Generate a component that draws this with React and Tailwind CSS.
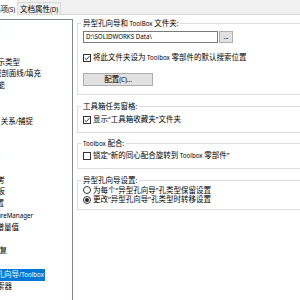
import React from "react";

function T({ s }) {
  const parts = s.match(/[\x20-\x7E]+|[^\x20-\x7E]+/g) || [];
  return parts.map((p, i) =>
    /^[\x20-\x7E]+$/.test(p) ? (
      <span key={i} className="text-[6.2px] whitespace-pre">{p}</span>
    ) : (
      <span key={i}>{p}</span>
    )
  );
}

function Check({ checked }) {
  return (
    <span className="w-[8px] h-[8px] border border-[#333333] bg-white flex items-center justify-center shrink-0">
      {checked && (
        <svg width="6" height="6" viewBox="0 0 6 6">
          <path d="M0.6 3 L2.3 4.7 L5.5 1.1" fill="none" stroke="#222" strokeWidth="0.9" />
        </svg>
      )}
    </span>
  );
}

function Radio({ checked }) {
  return (
    <span className="w-[8px] h-[8px] rounded-full border border-[#333333] bg-white flex items-center justify-center shrink-0">
      {checked && <span className="w-[4px] h-[4px] rounded-full bg-[#222222]" />}
    </span>
  );
}

const rows = [
  { t: "普通", w: "w-0" },
  { t: "MBD", w: "w-0" },
  { t: "工程图", w: "w-0" },
  { t: "显示类型", w: "w-[20px]" },
  { t: "区域剖面线/填充", w: "w-[41px]" },
  { t: "性能", w: "w-[5px]" },
  { t: "颜色", w: "w-0" },
  { t: "草图", w: "w-0" },
  { t: "关系/捕捉", w: "w-[33px]" },
  { t: "显示", w: "w-0" },
  { t: "选择", w: "w-0" },
  { t: "性能", w: "w-0" },
  { t: "装配体", w: "w-0" },
  { t: "外部参考", w: "w-[5px]" },
  { t: "默认模板", w: "w-[5px]" },
  { t: "文件位置", w: "w-[4px]" },
  { t: "FeatureManager", w: "w-[33px]" },
  { t: "选值框增量值", w: "w-[19px]" },
  { t: "视图", w: "w-0" },
  { t: "备份/恢复", w: "w-[7px]" },
  { t: "触摸", w: "w-0" },
  { t: "异型孔向导/Toolbox", w: "w-[45px]", sel: true },
  { t: "文件探索器", w: "w-[12px]" },
  { t: "搜索", w: "w-0" },
];

export default function App() {
  return (
    <div className="w-[300px] h-[300px] overflow-hidden bg-white text-black text-[7.5px] font-['Noto_Sans','Noto_Sans_CJK_SC',sans-serif]">
      {/* tab strip */}
      <div className="h-[15px] bg-[#f0f0f0] border-b border-[#d9d9d9] flex items-start">
        <div className="w-[18px] h-[15px] bg-white border-r border-[#d9d9d9] flex justify-end items-center pt-[4px] pr-[2px] whitespace-nowrap">
          <span className="leading-[11px]"><T s="系统选项(S)" /></span>
        </div>
        <div className="mt-[2px] h-[12px] px-[2px] border-t border-r border-[#d9d9d9] bg-[#f0f0f0] pt-[1px] leading-[10px] whitespace-nowrap">
          <T s="文档属性(D)" />
        </div>
      </div>

      {/* page */}
      <div className="flex items-start">
        {/* left tree list */}
        <div className="mt-[4px] w-[73px] h-[290px] shrink-0 border-t border-r border-[#828790] pt-[1px] overflow-hidden">
          {rows.map((r, i) => (
            <div key={i} className={`h-[11.8px] flex items-center justify-end whitespace-nowrap ${r.w}`}>
              <span className={`shrink-0 h-[11.8px] flex items-center ${r.sel ? "bg-[#0078d7] text-white pr-[1px]" : ""}`}>
                <T s={r.t} />
              </span>
            </div>
          ))}
        </div>

        {/* right settings */}
        <div className="ml-[4px] w-[240px] shrink-0 flex flex-col">
          <fieldset className="mt-[2.5px] border border-[#dcdcdc] pl-[5px] pb-[8px]">
            <legend className="-ml-[2px] px-[2px] h-[11px] leading-[11px] whitespace-nowrap">
              <T s="异型孔向导和 ToolBox 文件夹:" />
            </legend>
            <div className="mt-[2.5px] flex items-center h-[12px]">
              <div className="w-[135px] h-[12px] border border-[#7a7a7a] bg-white flex items-center pl-[2px] whitespace-nowrap">
                <T s={"D:\\SOLIDWORKS Data\\"} />
              </div>
              <div className="ml-[1px] w-[14px] h-[12px] bg-[#e1e1e1] border border-[#adadad] flex items-center justify-center">
                <span className="text-[6.2px] leading-none">...</span>
              </div>
            </div>
            <div className="mt-[9.5px] h-[11px] flex items-center gap-[2px] whitespace-nowrap">
              <Check checked />
              <span><T s="将此文件夹设为 Toolbox 零部件的默认搜索位置" /></span>
            </div>
            <div className="mt-[9.5px] w-[70px] h-[13px] bg-[#e1e1e1] border border-[#adadad] flex items-center justify-center whitespace-nowrap">
              <T s="配置(C)..." />
            </div>
          </fieldset>

          <fieldset className="mt-[5.5px] border border-[#dcdcdc] pl-[5px] pb-[6.5px]">
            <legend className="-ml-[2px] px-[2px] h-[11px] leading-[11px] whitespace-nowrap">
              <T s="工具箱任务窗格:" />
            </legend>
            <div className="mt-[3px] h-[11px] flex items-center gap-[2px] whitespace-nowrap">
              <Check checked />
              <span><T s="显示“工具箱收藏夹”文件夹" /></span>
            </div>
          </fieldset>

          <fieldset className="mt-[4.5px] border border-[#dcdcdc] pl-[5px] pb-[6.5px]">
            <legend className="-ml-[2px] px-[2px] h-[11px] leading-[11px] whitespace-nowrap">
              <T s="Toolbox 配合:" />
            </legend>
            <div className="mt-[2px] h-[11px] flex items-center gap-[2px] whitespace-nowrap">
              <Check />
              <span><T s="锁定“新的同心配合旋转到 Toolbox 零部件”" /></span>
            </div>
          </fieldset>

          <fieldset className="mt-[5.5px] border border-[#dcdcdc] pl-[5px] pb-[4.5px]">
            <legend className="-ml-[2px] px-[2px] h-[11px] leading-[11px] whitespace-nowrap">
              <T s="异型孔向导设置:" />
            </legend>
            <div className="mt-0 h-[9.5px] flex items-center gap-[2px] whitespace-nowrap">
              <Radio />
              <span><T s="为每个“异型孔向导”孔类型保留设置" /></span>
            </div>
            <div className="h-[9.5px] flex items-center gap-[2px] whitespace-nowrap">
              <Radio checked />
              <span><T s="更改“异型孔向导”孔类型时转移设置" /></span>
            </div>
          </fieldset>
        </div>
      </div>
    </div>
  );
}
